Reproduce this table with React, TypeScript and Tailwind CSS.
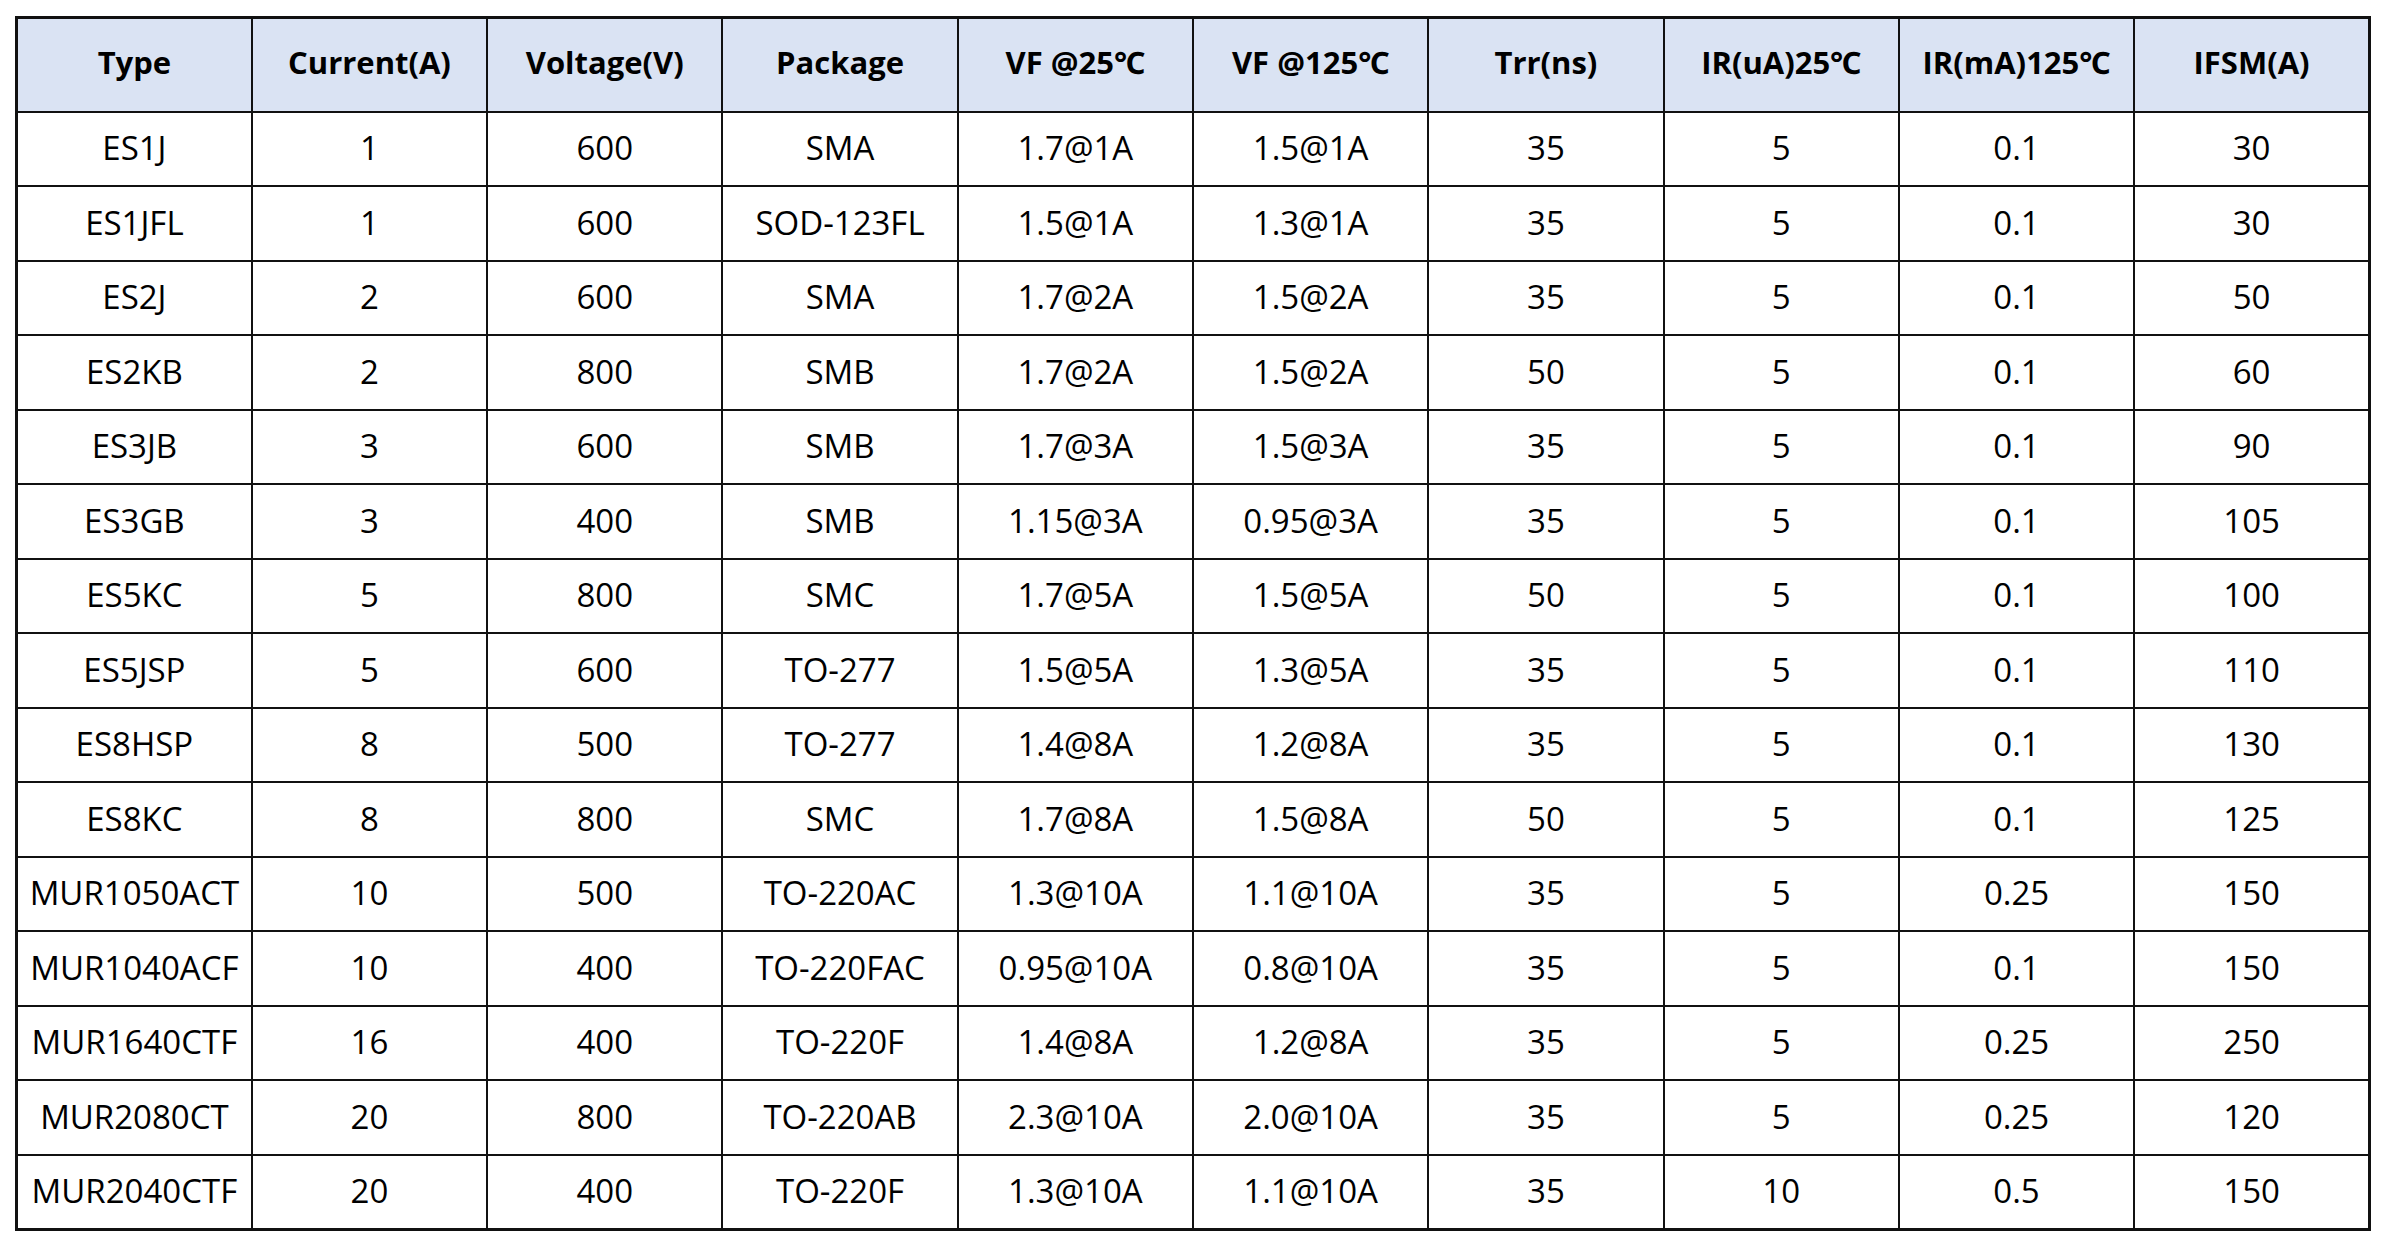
const headers = [
  "Type",
  "Current(A)",
  "Voltage(V)",
  "Package",
  "VF @25℃",
  "VF @125℃",
  "Trr(ns)",
  "IR(uA)25℃",
  "IR(mA)125℃",
  "IFSM(A)",
];

// type, current, voltage, package, vf25, vf125, trr, ir25, ir125, ifsm
const rows: string[][] = [
  ["ES1J", "1", "600", "SMA", "1.7@1A", "1.5@1A", "35", "5", "0.1", "30"],
  ["ES1JFL", "1", "600", "SOD-123FL", "1.5@1A", "1.3@1A", "35", "5", "0.1", "30"],
  ["ES2J", "2", "600", "SMA", "1.7@2A", "1.5@2A", "35", "5", "0.1", "50"],
  ["ES2KB", "2", "800", "SMB", "1.7@2A", "1.5@2A", "50", "5", "0.1", "60"],
  ["ES3JB", "3", "600", "SMB", "1.7@3A", "1.5@3A", "35", "5", "0.1", "90"],
  ["ES3GB", "3", "400", "SMB", "1.15@3A", "0.95@3A", "35", "5", "0.1", "105"],
  ["ES5KC", "5", "800", "SMC", "1.7@5A", "1.5@5A", "50", "5", "0.1", "100"],
  ["ES5JSP", "5", "600", "TO-277", "1.5@5A", "1.3@5A", "35", "5", "0.1", "110"],
  ["ES8HSP", "8", "500", "TO-277", "1.4@8A", "1.2@8A", "35", "5", "0.1", "130"],
  ["ES8KC", "8", "800", "SMC", "1.7@8A", "1.5@8A", "50", "5", "0.1", "125"],
  ["MUR1050ACT", "10", "500", "TO-220AC", "1.3@10A", "1.1@10A", "35", "5", "0.25", "150"],
  ["MUR1040ACF", "10", "400", "TO-220FAC", "0.95@10A", "0.8@10A", "35", "5", "0.1", "150"],
  ["MUR1640CTF", "16", "400", "TO-220F", "1.4@8A", "1.2@8A", "35", "5", "0.25", "250"],
  ["MUR2080CT", "20", "800", "TO-220AB", "2.3@10A", "2.0@10A", "35", "5", "0.25", "120"],
  ["MUR2040CTF", "20", "400", "TO-220F", "1.3@10A", "1.1@10A", "35", "10", "0.5", "150"],
];

export default function App() {
  return (
    <div className="min-h-screen bg-white pl-[15px] pt-[16px] font-['Open_Sans','Noto_Sans',sans-serif] text-black">
      <table className="w-[2356px] table-fixed border-collapse border-[3px] border-[#111]">
        <thead>
          <tr className="h-[94px] bg-[#dae3f3]">
            {headers.map((h) => (
              <th key={h} className="border-2 border-[#111] p-0 pb-[5px] text-center align-middle text-[31px] font-bold leading-none">
                {h}
              </th>
            ))}
          </tr>
        </thead>
        <tbody>
          {rows.map((r) => (
            <tr key={r[0]} className="h-[74.5px]">
              {r.map((c, i) => (
                <td key={i} className="border-2 border-[#111] p-0 pb-[2px] text-center align-middle text-[33px] leading-none">
                  {c}
                </td>
              ))}
            </tr>
          ))}
        </tbody>
      </table>
    </div>
  );
}
